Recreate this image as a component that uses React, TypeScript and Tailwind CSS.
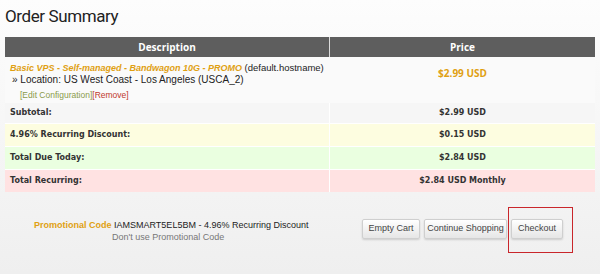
import React from "react";

export default function App() {
  const body = { fontFamily: '"Liberation Sans", Arial, sans-serif' };
  const bold = { fontFamily: '"DejaVu Sans", Verdana, sans-serif' };
  const btn =
    "h-[20px] whitespace-nowrap rounded-[2px] border border-[#cfcfcf] bg-gradient-to-b from-white to-[#e6e6e6] text-[9px] text-[#444] shadow-[0_1px_2px_rgba(0,0,0,0.15)]";
  return (
    <div
      className="w-[600px] h-[274px] overflow-hidden bg-gradient-to-b from-[#fdfdfd] to-[#efefef] text-[#333]"
      style={body}
    >
      <div
        className="pl-[5px] pt-[4px] h-[34px] text-[17px] leading-[24px] tracking-[-0.4px] text-[#222]"
        style={{ fontFamily: 'Roboto, sans-serif' }}
      >
        Order Summary
      </div>
      <div className="ml-[5px] w-[590px] mt-[3px]">
        {/* header */}
        <div className="flex h-[20px] bg-[#5e5e5e] text-white text-[10px] font-bold" style={{ fontFamily: '"Open Sans", sans-serif' }}>
          <div className="w-[325px] flex items-center justify-center border-r border-[#dcdcdc]">Description</div>
          <div className="flex-1 flex items-center justify-center">Price</div>
        </div>
        {/* product */}
        <div className="flex h-[33px] bg-[#fafafa]">
          <div className="w-[325px] pl-[5px] pt-[5px] text-[9px] leading-[12px] whitespace-nowrap">
            <div>
              <span className="text-[#e0a012] font-bold italic">Basic VPS - Self-managed - Bandwagon 10G - PROMO</span>{" "}
              <span className="text-[#222] text-[9.5px]">(default.hostname)</span>
            </div>
            <div className="pl-[2px] text-[#222] text-[10px]">» Location: US West Coast - Los Angeles (USCA_2)</div>
          </div>
          <div className="flex-1 flex items-center justify-center text-[10px] font-bold text-[#e0a012]" style={{ fontFamily: '"Open Sans", sans-serif' }}>
            $2.99 USD
          </div>
        </div>
        <div className="h-[13px] bg-[#fafafa] pl-[15px] text-[8.5px] leading-[10px]">
          <span className="text-[#8a9a4a]">[Edit Configuration]</span>
          <span className="text-[#c0392b]">[Remove]</span>
        </div>
        {/* subtotal */}
        <div className="flex h-[20px] bg-[#f6f6f6] text-[8px] font-bold text-[#333]" style={bold}>
          <div className="w-[325px] pl-[5px] flex items-center border-r border-white">Subtotal:</div>
          <div className="flex-1 flex items-center justify-center">$2.99 USD</div>
        </div>
        <div className="h-px bg-white" />
        <div className="flex h-[22px] bg-[#fdfde0] text-[8px] font-bold text-[#333]" style={bold}>
          <div className="w-[325px] pl-[5px] flex items-center border-r border-white">4.96% Recurring Discount:</div>
          <div className="flex-1 flex items-center justify-center">$0.15 USD</div>
        </div>
        <div className="h-px bg-white" />
        <div className="flex h-[22px] bg-[#eaffe0] text-[8px] font-bold text-[#333]" style={bold}>
          <div className="w-[325px] pl-[5px] flex items-center border-r border-white">Total Due Today:</div>
          <div className="flex-1 flex items-center justify-center">$2.84 USD</div>
        </div>
        <div className="h-px bg-white" />
        <div className="flex h-[22px] bg-[#ffe2e2] text-[8px] font-bold text-[#333]" style={bold}>
          <div className="w-[325px] pl-[5px] flex items-center border-r border-white">Total Recurring:</div>
          <div className="flex-1 flex items-center justify-center">$2.84 USD Monthly</div>
        </div>
      </div>
      {/* bottom area */}
      <div className="flex mt-[15px]">
        <div className="w-[355px] pl-[34px] pt-[12px] text-[9px] leading-[12px] whitespace-nowrap">
          <div>
            <span className="font-bold text-[#e0a012]">Promotional Code</span>{" "}
            <span className="text-[#222]">IAMSMART5EL5BM - 4.96% Recurring Discount</span>
          </div>
          <div className="pl-[78px] text-[#777]">Don't use Promotional Code</div>
        </div>
        <div className="relative flex gap-[4px] pt-[12px] pl-[7px]">
          <button className={`${btn} w-[58px]`}>Empty Cart</button>
          <button className={`${btn} w-[83px]`}>Continue Shopping</button>
          <button className={`${btn} w-[52px]`}>Checkout</button>
          <div className="absolute left-[153px] top-0 w-[65px] h-[46px] border border-[#c9262b]" />
        </div>
      </div>
    </div>
  );
}
